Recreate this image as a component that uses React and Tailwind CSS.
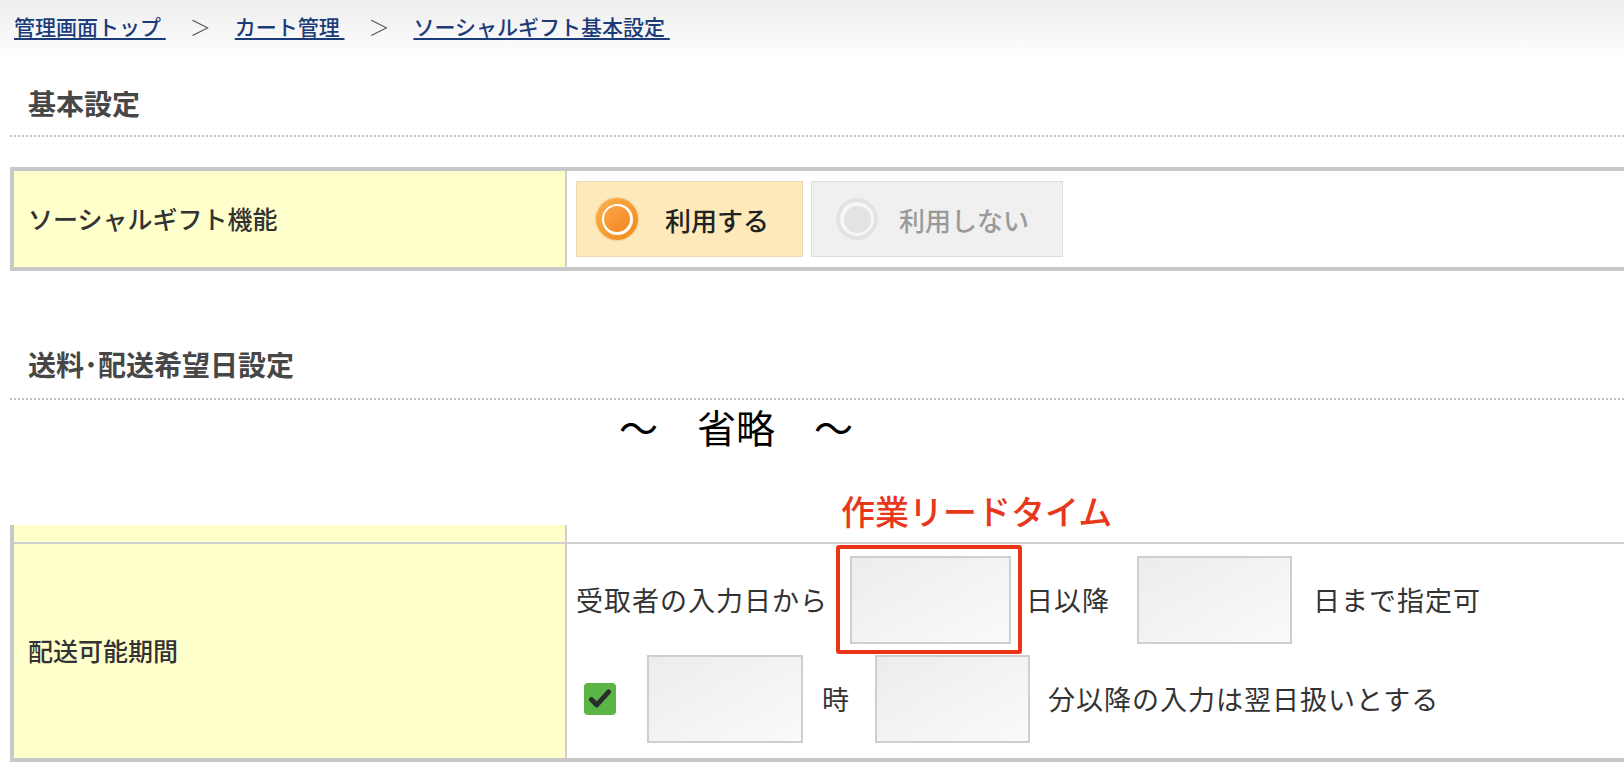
import React from "react";

const font = "font-['Noto_Sans_CJK_JP','Noto_Sans',sans-serif]";

function Radio({ checked }) {
  if (checked) {
    return (
      <span className="w-[42px] h-[42px] rounded-full bg-gradient-to-br from-[#fbb04a] to-[#ef8a1c] flex items-center justify-center shadow-[0_0_2px_rgba(200,120,20,0.6)]">
        <span className="w-[31px] h-[31px] rounded-full bg-white flex items-center justify-center">
          <span className="w-[26px] h-[26px] rounded-full bg-gradient-to-br from-[#fba646] to-[#f2861a]" />
        </span>
      </span>
    );
  }
  return (
    <span className="w-[42px] h-[42px] rounded-full bg-[#e2e2e2] flex items-center justify-center">
      <span className="w-[34px] h-[34px] rounded-full bg-[#f6f6f6] flex items-center justify-center">
        <span className="w-[27px] h-[27px] rounded-full bg-[#e3e3e3]" />
      </span>
    </span>
  );
}

function Field({ className = "" }) {
  return (
    <div className={"h-[88px] border-2 border-[#cfcfcf] bg-gradient-to-br from-[#ececec] to-[#fafafa] " + className} />
  );
}

function Heading({ children }) {
  return (
    <div className="pl-[28px] text-[28px] font-bold text-[#474747] leading-none">{children}</div>
  );
}

function Dotted() {
  return <div className="ml-[10px] border-t-2 border-dotted border-[#c4c4c4]" />;
}

export default function App() {
  return (
    <div className={"w-[1624px] h-[776px] bg-white overflow-hidden " + font}>
      {/* breadcrumb */}
      <div className="h-[60px] bg-gradient-to-b from-[#ededed] to-white pt-[13px] pl-[14px] flex items-start text-[21px] leading-[26px] font-medium">
        <a className="text-[#1b3c78] underline underline-offset-[3px] whitespace-pre">管理画面トップ </a>
        <span className="mx-[24px] text-[#555] font-light">＞</span>
        <a className="text-[#1b3c78] underline underline-offset-[3px] whitespace-pre">カート管理 </a>
        <span className="mx-[24px] text-[#555] font-light">＞</span>
        <a className="text-[#1b3c78] underline underline-offset-[3px] whitespace-pre">ソーシャルギフト基本設定 </a>
      </div>

      <div className="pt-[29px]">
        <Heading>基本設定</Heading>
      </div>
      <div className="pt-[18px]">
        <Dotted />
      </div>

      {/* social gift table */}
      <div className="mt-[30px] ml-[10px] flex h-[104px] border-y-4 border-l-4 border-[#c8c8c8]">
        <div className="w-[553px] shrink-0 bg-[#ffffcc] border-r-2 border-[#cfcfcf] flex items-center pl-[14px] text-[25px] font-medium text-[#333]">
          ソーシャルギフト機能
        </div>
        <div className="flex-1 flex items-center pl-[9px] gap-[8px]">
          <div className="w-[227px] h-[76px] bg-[#fde9b9] border border-[#ead9b4] flex items-center pl-[19px] gap-[27px]">
            <Radio checked />
            <span className="text-[26px] font-medium text-[#222]">利用する</span>
          </div>
          <div className="w-[252px] h-[76px] bg-[#f0f0f0] border border-[#dedede] flex items-center pl-[24px] gap-[21px]">
            <Radio />
            <span className="text-[26px] font-medium text-[#9a9a9a]">利用しない</span>
          </div>
        </div>
      </div>

      <div className="pt-[79px]">
        <Heading>送料･配送希望日設定</Heading>
      </div>
      <div className="pt-[20px]">
        <Dotted />
      </div>

      {/* omitted */}
      <div className="pl-[619px] pt-[3px] text-[39px] leading-[46px] text-black whitespace-pre">～　省略　～</div>

      {/* delivery table */}
      <div className="relative mt-[76px] ml-[10px] border-l-4 border-b-4 border-[#c8c8c8]">
        <div className="absolute left-[827px] top-[-31px] text-[34px] leading-none font-medium text-[#e8381c]">
          作業リードタイム
        </div>
        <div className="flex h-[17px]">
          <div className="w-[553px] shrink-0 bg-[#ffffcc] border-r-2 border-[#cfcfcf]" />
          <div className="flex-1" />
        </div>
        <div className="flex h-[216px] border-t-2 border-[#cfcfcf]">
          <div className="w-[553px] shrink-0 bg-[#ffffcc] border-r-2 border-[#cfcfcf] flex items-center pl-[14px] text-[25px] font-medium text-[#333]">
            配送可能期間
          </div>
          <div className="flex-1 flex flex-col pt-[12px] gap-[11px] text-[27px] tracking-[1px] text-[#333]">
            <div className="flex items-center pl-[9px]">
              <span>受取者の入力日から</span>
              <div className="relative ml-[22px]">
                <Field className="w-[161px]" />
                <div className="absolute -left-[14px] -right-[11px] -top-[11px] -bottom-[10px] border-4 border-[#ec3418] rounded-[3px]" />
              </div>
              <span className="ml-[15px]">日以降</span>
              <Field className="w-[155px] ml-[27px]" />
              <span className="ml-[21px]">日まで指定可</span>
            </div>
            <div className="flex items-center pl-[17px]">
              <span className="w-[32px] h-[32px] rounded-[4px] bg-[#5bb546] flex items-center justify-center">
                <svg width="26" height="26" viewBox="0 0 24 24">
                  <path d="M4 12.5l5 5L20 5.5" fill="none" stroke="#2b2b2b" strokeWidth="4.5" strokeLinecap="round" strokeLinejoin="round" />
                </svg>
              </span>
              <Field className="w-[156px] ml-[31px]" />
              <span className="ml-[19px]">時</span>
              <Field className="w-[155px] ml-[25px]" />
              <span className="ml-[18px]">分以降の入力は翌日扱いとする</span>
            </div>
          </div>
        </div>
      </div>
    </div>
  );
}
